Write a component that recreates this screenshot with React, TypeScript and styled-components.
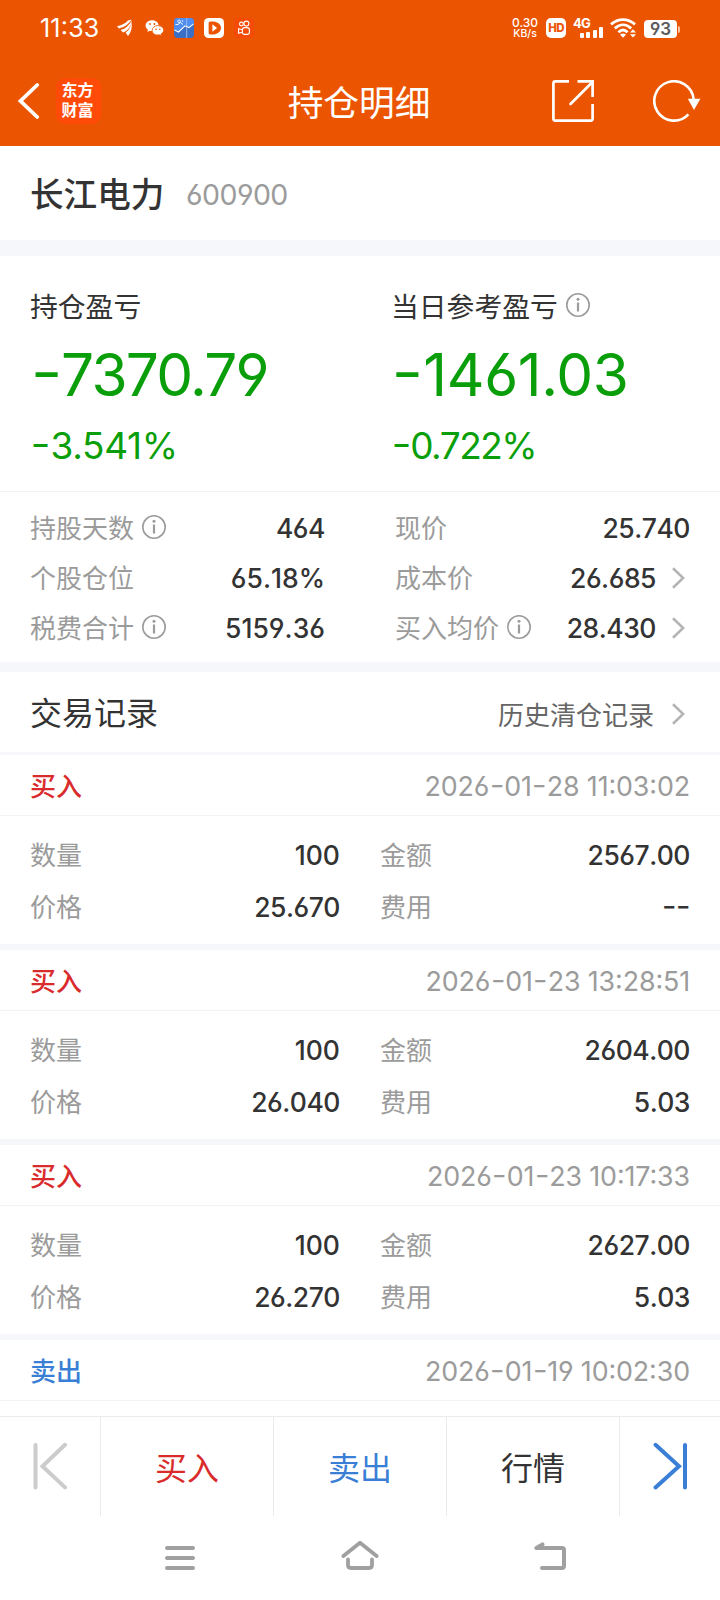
import React from "react";
import styled, { createGlobalStyle } from "styled-components";

const color = {
  brand: "#eb5502",
  ink: "#333333",
  sub: "#666666",
  muted: "#9b9b9b",
  green: "#0a9f0a",
  red: "#d92b2b",
  blue: "#3a7fd5",
  band: "#f6f7fa",
  line: "#f3f3f5",
};

const GlobalStyle = createGlobalStyle`
  *, *::before, *::after { box-sizing: border-box; }
  body {
    margin: 0;
    background: #fff;
    font-family: "Noto Sans CJK SC", sans-serif;
    color: ${color.ink};
  }
  svg { display: block; flex: none; }
`;

const Screen = styled.div`
  width: 720px;
  height: 1600px;
  overflow: hidden;
  display: flex;
  flex-direction: column;
  background: #fff;
`;

const Digits = styled.span<{ $size: number; $weight?: number; $gap?: number; $color?: string; $noKern?: boolean }>`
  font-family: Inter, "Noto Sans CJK SC", sans-serif;
  font-feature-settings: "cv03", "cv04", "case";
  font-kerning: ${(p) => (p.$noKern ? "none" : "auto")};
  font-size: ${(p) => p.$size}px;
  font-weight: ${(p) => p.$weight ?? 400};
  letter-spacing: ${(p) => p.$gap ?? 0}px;
  color: ${(p) => p.$color ?? "inherit"};
  line-height: 1;
  white-space: nowrap;
`;

const Dash = styled.span`
  display: inline-block;
  margin: 0 0.05em 0 0.05em;
  transform: scaleX(1.18);
`;

/* ---------- header ---------- */

const Header = styled.header`
  height: 146px;
  flex: none;
  background: ${color.brand};
  color: #fff;
`;

const StatusBar = styled.div`
  height: 56px;
  display: flex;
  align-items: center;
  justify-content: space-between;
  padding: 0 40px 0 40px;
`;

const StatusGroup = styled.div<{ $gap: number }>`
  display: flex;
  align-items: center;
  gap: ${(p) => p.$gap}px;
`;

const Clock = styled(Digits)`
  width: 67px;
`;

const NetSpeed = styled.div`
  font: 500 11px/10px Inter, sans-serif;
  text-align: center;
  width: 28px;
`;

const SpeedValue = styled.div`
  font-size: 12px;
`;

const SpeedUnit = styled.div`
  font-size: 10.5px;
  padding-top: 1px;
`;

const HdBadge = styled.div`
  width: 20px;
  height: 20px;
  border-radius: 5px;
  background: #fff;
  color: ${color.brand};
  font: 800 11.5px/20px Inter, sans-serif;
  letter-spacing: -0.6px;
  text-align: center;
`;

const Signal = styled.div`
  width: 30px;
  height: 20px;
  display: flex;
  flex-direction: column;
`;

const SignalLabel = styled.div`
  font: 700 13px/10px Inter, sans-serif;
  letter-spacing: -0.8px;
`;

const Bars = styled.div`
  display: flex;
  align-items: flex-end;
  justify-content: flex-end;
  gap: 2.5px;
  height: 11px;
  margin-top: -1px;
`;

const Bar = styled.i<{ $h: number }>`
  width: 4px;
  height: ${(p) => p.$h}px;
  border-radius: 1px;
  background: #fff;
`;

const BatteryWrap = styled.div`
  display: flex;
  align-items: center;
  padding-top: 2px;
`;

const Battery = styled.div`
  width: 33px;
  height: 18px;
  border-radius: 4px;
  background: #fff;
  color: #5a5a5a;
  font: 600 17px/19px Inter, sans-serif;
  font-feature-settings: "cv04";
  text-align: center;
`;

const BatteryNub = styled.div`
  width: 2px;
  height: 7px;
  margin-left: 1px;
  border-radius: 0 2px 2px 0;
  background: #f8c5a4;
`;

const TitleBar = styled.div`
  height: 90px;
  display: grid;
  grid-template-columns: 1fr auto 1fr;
  align-items: center;
  padding: 0 19px 0 16px;
`;

const TitleLeft = styled.div`
  display: flex;
  align-items: center;
  gap: 14px;
`;

const BrandLogo = styled.div`
  width: 45px;
  height: 46px;
  border-radius: 9px;
  background: #ff4a08;
  font-size: 16px;
  font-weight: 700;
  line-height: 20px;
  padding: 1px 0 0 5.5px;
`;

const Title = styled.h1`
  margin: 0;
  font-size: 35.7px;
  font-weight: 400;
  line-height: 48px;
  padding-left: 1px;
`;

const TitleRight = styled.div`
  display: flex;
  justify-content: flex-end;
  gap: 59px;
`;

/* ---------- summary ---------- */

const StockRow = styled.section`
  height: 94px;
  flex: none;
  display: flex;
  align-items: center;
  gap: 22px;
  padding: 0 30px 0 30px;
`;

const StockName = styled.h2`
  margin: 0;
  font-size: 33.6px;
  font-weight: 500;
  line-height: 50px;
  width: 134px;
  white-space: nowrap;
`;

const StockCode = styled(Digits)`
  padding-top: 5px;
`;

const Band = styled.div<{ $h: number }>`
  height: ${(p) => p.$h}px;
  flex: none;
  background: ${color.band};
`;

const Summary = styled.section`
  height: 236px;
  flex: none;
  display: grid;
  grid-template-columns: 361px 1fr;
  padding: 29px 0 0 30px;
  border-bottom: 1px solid ${color.line};
`;

const SummaryCell = styled.div`
  display: flex;
  flex-direction: column;
`;

const SummaryLabel = styled.div`
  display: flex;
  align-items: center;
  gap: 8px;
  height: 40px;
  font-size: 27.8px;
`;

const BigValue = styled(Digits)`
  margin-top: 21px;
`;

const Percent = styled(Digits)`
  margin-top: 22px;
`;

/* ---------- statistics ---------- */

const Stats = styled.section`
  height: 170px;
  flex: none;
  display: grid;
  grid-template-columns: 295px 295px;
  column-gap: 70px;
  grid-auto-rows: 50px;
  padding: 11px 30px 0;
`;

const Pair = styled.div`
  display: flex;
  align-items: center;
  justify-content: space-between;
`;

const Label = styled.span`
  display: flex;
  align-items: center;
  gap: 8px;
  font-size: 26px;
  line-height: 38px;
  padding-bottom: 2px;
  color: ${color.muted};
`;

const ValueGroup = styled.span<{ $link?: boolean }>`
  display: flex;
  align-items: center;
  gap: 16px;
  padding-right: ${(p) => (p.$link ? 5 : 0)}px;
`;

/* ---------- records ---------- */

const RecordsHead = styled.section`
  height: 80px;
  flex: none;
  display: flex;
  align-items: center;
  justify-content: space-between;
  padding: 0 35px 0 30px;
`;

const RecordsTitle = styled.h2`
  margin: 0;
  font-size: 32px;
  font-weight: 400;
  line-height: 46px;
  padding-bottom: 2px;
`;

const HistoryLink = styled.div`
  display: flex;
  align-items: center;
  gap: 18px;
  font-size: 26px;
  line-height: 38px;
  padding-top: 3px;
  color: ${color.sub};
`;

const RecordList = styled.div`
  flex: 1;
  min-height: 0;
  overflow: hidden;
`;

const RecordHead = styled.div`
  height: 61px;
  display: flex;
  align-items: center;
  justify-content: space-between;
  padding: 3px 30px 0;
  border-bottom: 1px solid ${color.line};
`;

const Side = styled.span<{ $sell?: boolean }>`
  font-size: 26px;
  font-weight: 500;
  line-height: 38px;
  padding-bottom: 3px;
  color: ${(p) => (p.$sell ? color.blue : color.red)};
`;

const RecordBody = styled.div`
  height: 128px;
  display: grid;
  grid-template-columns: 310px 310px;
  column-gap: 40px;
  grid-auto-rows: 52px;
  padding: 13px 30px 0;
`;

/* ---------- footer ---------- */

const ActionBar = styled.nav`
  height: 100px;
  flex: none;
  display: grid;
  grid-template-columns: 101px 173px 173px 173px 100px;
  border-top: 1px solid #ebebeb;
`;

const Action = styled.div<{ $color?: string }>`
  display: flex;
  align-items: center;
  justify-content: center;
  font-size: 32px;
  padding-bottom: 2px;
  color: ${(p) => p.$color ?? color.ink};
  border-right: 1px solid #ebebeb;
  &:last-child { border-right: 0; }
`;

const SystemNav = styled.div`
  height: 84px;
  flex: none;
  display: grid;
  grid-template-columns: 30px 300px 60px 320px 10px;
  grid-template-rows: 30px;
  padding-top: 24px;
  justify-items: center;
  align-items: end;
`;

const NavItem = styled.div<{ $column: number }>`
  grid-column: ${(p) => p.$column};
`;

/* ---------- icons ---------- */

const InfoIcon = () => (
  <svg width="24" height="24" viewBox="0 0 24 24" fill="none" stroke={color.muted}>
    <circle cx="12" cy="12" r="11.2" strokeWidth="1.6" />
    <path d="M12 9.5V18.5" strokeWidth="2.2" />
    <circle cx="12" cy="6.2" r="1.5" fill={color.muted} stroke="none" />
  </svg>
);

const Chevron = () => (
  <svg width="13" height="22" viewBox="0 0 13 22" fill="none" stroke="#b4b4b4" strokeWidth="2.6">
    <path d="M1 1.2L11.2 11L1 20.8" />
  </svg>
);

const BackIcon = () => (
  <svg width="26" height="38" viewBox="0 0 26 38" fill="none" stroke="#fff" strokeWidth="3.8" strokeLinecap="round" strokeLinejoin="miter">
    <path d="M21.2 3L4.5 19L21.2 35" />
  </svg>
);

const ShareIcon = () => (
  <svg width="42" height="42" viewBox="0 0 42 42" fill="none" stroke="#fff" strokeWidth="2.7">
    <path d="M17 1.4H3.4Q1.4 1.4 1.4 3.4V38.6Q1.4 40.6 3.4 40.6H38.6Q40.6 40.6 40.6 38.6V24" />
    <path d="M25.5 1.4H40.6V17" />
    <path d="M18.5 24L40 2.5" strokeLinecap="round" />
  </svg>
);

const RefreshIcon = () => (
  <svg width="48" height="42" viewBox="0 0 48 42" fill="none" stroke="#fff" strokeWidth="2.6">
    <path d="M35.4 34.4A19.7 19.7 0 1 1 40.6 19" />
    <path d="M34.8 18.8H47.4L41 30Z" fill="#fff" stroke="none" />
  </svg>
);

const LeafIcon = () => (
  <svg width="18" height="18" viewBox="0 0 18 18" fill="#fff">
    <path d="M0 7.2C4 6.6 8 4.8 11 1.6L14.6 0.6C12 5 7.4 8.6 2 9.4Z" />
    <path d="M3.6 11C8.6 9.6 12.2 6.2 14.8 1.4C14.4 7 11 11.6 6 13.6Z" />
    <path d="M8.6 13.6C12 11.4 13.8 7.6 14.6 3.4C15.4 8.4 13.8 13.8 11 17Z" />
  </svg>
);

const ChatIcon = () => (
  <svg width="19" height="18" viewBox="0 0 19 18">
    <path d="M7.2 1.2C3.4 1.2 0.6 3.6 0.6 6.6C0.6 8.4 1.5 9.8 3 10.8L2.4 13L4.8 11.8C8 12.8 13.6 11.2 13.6 6.6C13.6 3.6 10.8 1.2 7.2 1.2Z" fill="#fff" />
    <path d="M12.8 6.6C9.6 6.6 7.2 8.6 7.2 11.4C7.2 14.8 10.8 16.6 14.4 15.8L16.4 16.8L16 15C17.6 14 18.6 12.8 18.6 11.2C18.6 8.6 16 6.6 12.8 6.6Z" fill="#fff" stroke={color.brand} strokeWidth="0.8" />
    <circle cx="5" cy="5" r="0.9" fill={color.brand} />
    <circle cx="9.4" cy="5" r="0.9" fill={color.brand} />
    <circle cx="11" cy="10.2" r="0.8" fill={color.brand} />
    <circle cx="14.8" cy="10.2" r="0.8" fill={color.brand} />
  </svg>
);

const MarketIcon = () => (
  <svg width="20" height="20" viewBox="0 0 20 20" fill="none">
    <rect width="20" height="20" rx="4" fill="#3b6fc6" />
    <path d="M0 12L5 13L11 7L15 9L20 6V4A4 4 0 0 0 16 0H4A4 4 0 0 0 0 4Z" fill="#4f8df0" />
    <path d="M12.7 0V20" stroke="#a9c5ef" strokeWidth="0.8" />
    <path d="M0.5 12L4.5 14L11 7.8L15 9.6L19.5 5.8" stroke="#fff" strokeWidth="1.1" />
    <path d="M1.5 6.5H4L6.5 4.5L9 6.5" stroke="#fff" strokeWidth="0.9" />
    <circle cx="5" cy="3.3" r="1.3" stroke="#fff" strokeWidth="0.8" />
    <circle cx="8.5" cy="3" r="0.7" fill="#fff" />
  </svg>
);

const PlayIcon = () => (
  <svg width="20" height="20" viewBox="0 0 20 20">
    <rect width="20" height="20" rx="4.5" fill="#fff" />
    <path d="M4.6 5.2Q4.6 3.6 6.2 3.6H10Q17 5 17 10Q17 15 10 16.4H6.2Q4.6 16.4 4.6 14.8Z" fill={color.brand} />
    <path d="M8.4 6.3L13 10L8.4 13.7Z" fill="#fff" />
  </svg>
);

const KwaiIcon = () => (
  <svg width="20" height="20" viewBox="0 0 20 20" fill="none" stroke="#fff" strokeWidth="1.1">
    <rect width="20" height="20" rx="4" fill="#f44b08" stroke="none" />
    <circle cx="7.4" cy="6" r="1.9" />
    <circle cx="12.4" cy="5.6" r="2.5" />
    <rect x="8.4" y="9.6" width="7" height="6.8" rx="2.2" />
    <path d="M8.2 11.8L4.6 10.8V15.2L8.2 14.2" />
  </svg>
);

const WifiIcon = () => (
  <svg width="27" height="20" viewBox="0 0 27 20" fill="none" stroke="#fff" strokeWidth="2.8">
    <path d="M1 6.4C8 -0.1 18 -0.1 25 6.4" />
    <path d="M4.8 10.4C10 5.6 16 5.6 21.2 10.4" />
    <path d="M8.4 14.2C11.4 11.4 14.6 11.4 17.6 14.2" />
    <path d="M10 16.6Q13 14.6 16 16.6L13 19.8Z" fill="#fff" stroke="none" />
    <path d="M20 14.6L23 11.2L26 14.6ZM20 16.2L23 19.6L26 16.2Z" fill="#fff" stroke="none" />
  </svg>
);

const JumpIcon = ({ end }: { end?: boolean }) => (
  <svg width="34" height="48" viewBox="0 0 34 48" fill="none" stroke={end ? color.blue : "#cccccc"} strokeWidth="4" strokeLinecap="round">
    {end ? <path d="M2.5 2.8L26 24.3L2.5 45.4M32 3V45.5" /> : <path d="M32 2.8L9.5 24.3L32 45.4M2.5 3V45.5" />}
  </svg>
);

const MenuIcon = () => (
  <svg width="30" height="26" viewBox="0 0 30 26" stroke="#a0a0a0" strokeWidth="4" strokeLinecap="round">
    <path d="M2 4H28M2 14H28M2 24H28" />
  </svg>
);

const HomeIcon = () => (
  <svg width="38" height="30" viewBox="0 0 38 30" fill="none" stroke="#a0a0a0" strokeWidth="3.8" strokeLinecap="round" strokeLinejoin="round">
    <path d="M2.4 16L19 2.8L35.6 16" />
    <path d="M7 19.5V25Q7 28 10 28H28Q31 28 31 25V19.5" />
  </svg>
);

const ReturnIcon = () => (
  <svg width="32" height="30" viewBox="0 0 32 30" fill="none" stroke="#a0a0a0" strokeWidth="4" strokeLinecap="round" strokeLinejoin="round">
    <path d="M8.5 4.4L2.4 8H28Q30 8 30 10V26Q30 28 28 28H8" />
  </svg>
);

/* ---------- content ---------- */

type Stat = { label: string; value: string; info?: boolean; link?: boolean };

const stats: Stat[] = [
  { label: "持股天数", value: "464", info: true },
  { label: "现价", value: "25.740" },
  { label: "个股仓位", value: "65.18%" },
  { label: "成本价", value: "26.685", link: true },
  { label: "税费合计", value: "5159.36", info: true },
  { label: "买入均价", value: "28.430", info: true, link: true },
];

type Trade = { sell?: boolean; time: string; fields?: [string, string][] };

const trades: Trade[] = [
  { time: "2026-01-28 11:03:02", fields: [["数量", "100"], ["金额", "2567.00"], ["价格", "25.670"], ["费用", "--"]] },
  { time: "2026-01-23 13:28:51", fields: [["数量", "100"], ["金额", "2604.00"], ["价格", "26.040"], ["费用", "5.03"]] },
  { time: "2026-01-23 10:17:33", fields: [["数量", "100"], ["金额", "2627.00"], ["价格", "26.270"], ["费用", "5.03"]] },
  { sell: true, time: "2026-01-19 10:02:30" },
];

/* Gives every hyphen in a number or date its wider shape and side bearings. */
const spaced = (text: string) =>
  text.split(/(-)/).map((part, i) => (part === "-" ? <Dash key={i}>-</Dash> : part));

/* The numeral 1 is narrow, so values that hold it are tracked a little wider. */
const tracking = (text: string) => -0.48 + 0.5 * (text.split("1").length - 1);

const Value = ({ children }: { children: string }) => (
  <Digits $size={26.5} $weight={500} $gap={tracking(children)} $noKern>{spaced(children)}</Digits>
);

export default function App() {
  return (
    <Screen>
      <GlobalStyle />
      <Header>
        <StatusBar>
          <StatusGroup $gap={10}>
            <Clock $size={25} $gap={0.2}>11:33</Clock>
            <LeafIcon />
            <ChatIcon />
            <MarketIcon />
            <PlayIcon />
            <KwaiIcon />
          </StatusGroup>
          <StatusGroup $gap={7}>
            <NetSpeed>
              <SpeedValue>0.30</SpeedValue>
              <SpeedUnit>KB/s</SpeedUnit>
            </NetSpeed>
            <HdBadge>HD</HdBadge>
            <Signal>
              <SignalLabel>4G</SignalLabel>
              <Bars>
                <Bar $h={5} />
                <Bar $h={6} />
                <Bar $h={8} />
                <Bar $h={11} />
              </Bars>
            </Signal>
            <WifiIcon />
            <BatteryWrap>
              <Battery>93</Battery>
              <BatteryNub />
            </BatteryWrap>
          </StatusGroup>
        </StatusBar>
        <TitleBar>
          <TitleLeft>
            <BackIcon />
            <BrandLogo>
              东方
              <br />
              财富
            </BrandLogo>
          </TitleLeft>
          <Title>持仓明细</Title>
          <TitleRight>
            <ShareIcon />
            <RefreshIcon />
          </TitleRight>
        </TitleBar>
      </Header>

      <StockRow>
        <StockName>长江电力</StockName>
        <StockCode $size={28.5} $gap={-0.55} $color={color.muted}>600900</StockCode>
      </StockRow>
      <Band $h={16} />

      <Summary>
        <SummaryCell>
          <SummaryLabel>持仓盈亏</SummaryLabel>
          <BigValue $size={58.5} $gap={-1.75} $color={color.green}>{spaced("-7370.79")}</BigValue>
          <Percent $size={37} $gap={-0.3} $color={color.green}>{spaced("-3.541%")}</Percent>
        </SummaryCell>
        <SummaryCell>
          <SummaryLabel>
            当日参考盈亏
            <InfoIcon />
          </SummaryLabel>
          <BigValue $size={58.5} $gap={-0.4} $color={color.green}>{spaced("-1461.03")}</BigValue>
          <Percent $size={37} $gap={-1.5} $color={color.green}>{spaced("-0.722%")}</Percent>
        </SummaryCell>
      </Summary>

      <Stats>
        {stats.map((s) => (
          <Pair key={s.label}>
            <Label>
              {s.label}
              {s.info && <InfoIcon />}
            </Label>
            <ValueGroup $link={s.link}>
              <Value>{s.value}</Value>
              {s.link && <Chevron />}
            </ValueGroup>
          </Pair>
        ))}
      </Stats>
      <Band $h={10} />

      <RecordsHead>
        <RecordsTitle>交易记录</RecordsTitle>
        <HistoryLink>
          历史清仓记录
          <Chevron />
        </HistoryLink>
      </RecordsHead>
      <Band $h={3} />

      <RecordList>
        {trades.map((t) => (
          <React.Fragment key={t.time}>
            <RecordHead>
              <Side $sell={t.sell}>{t.sell ? "卖出" : "买入"}</Side>
              <Digits $size={26.8} $gap={-0.1} $color={color.muted}>{spaced(t.time)}</Digits>
            </RecordHead>
            {t.fields && (
              <>
                <RecordBody>
                  {t.fields.map(([label, value]) => (
                    <Pair key={label}>
                      <Label>{label}</Label>
                      <Value>{value}</Value>
                    </Pair>
                  ))}
                </RecordBody>
                <Band $h={6} />
              </>
            )}
          </React.Fragment>
        ))}
      </RecordList>

      <ActionBar>
        <Action><JumpIcon /></Action>
        <Action $color={color.red}>买入</Action>
        <Action $color={color.blue}>卖出</Action>
        <Action>行情</Action>
        <Action><JumpIcon end /></Action>
      </ActionBar>
      <SystemNav>
        <NavItem $column={2}><MenuIcon /></NavItem>
        <NavItem $column={3}><HomeIcon /></NavItem>
        <NavItem $column={4}><ReturnIcon /></NavItem>
      </SystemNav>
    </Screen>
  );
}
